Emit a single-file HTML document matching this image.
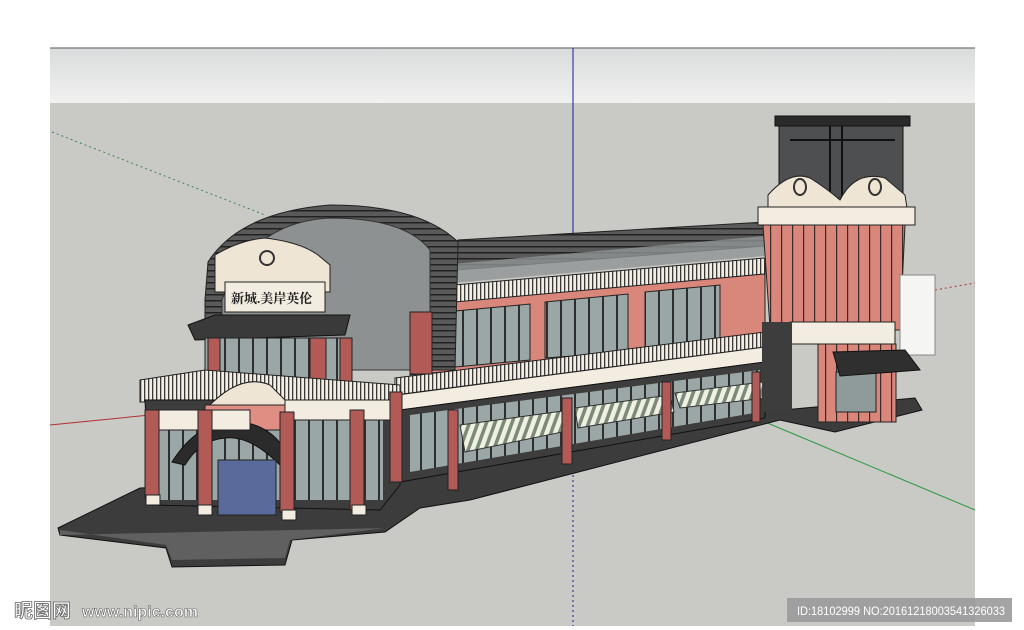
<!DOCTYPE html>
<html><head><meta charset="utf-8"><style>
html,body{margin:0;padding:0;background:#fff;width:1024px;height:630px;overflow:hidden;font-family:"Liberation Sans","Noto Sans CJK SC",sans-serif}
</style></head><body>
<svg width="1024" height="630" viewBox="0 0 1024 630" xmlns="http://www.w3.org/2000/svg" style="position:absolute;left:0;top:0">
<defs>
<linearGradient id="sky" x1="0" y1="0" x2="0" y2="1"><stop offset="0" stop-color="#d9dcdc"/><stop offset="1" stop-color="#f1f1f0"/></linearGradient>
<pattern id="stripe" width="8" height="8" patternUnits="userSpaceOnUse" patternTransform="rotate(20)"><rect width="8" height="8" fill="#eef0e4"/><rect width="3.5" height="8" fill="#7d8a78"/></pattern>
<pattern id="bal" width="4" height="10" patternUnits="userSpaceOnUse"><rect width="4" height="10" fill="#f3ede2"/><rect width="1.3" height="10" fill="#3a3a3a"/></pattern>
<pattern id="win" width="14" height="40" patternUnits="userSpaceOnUse"><rect width="14" height="40" fill="#9aa7a6"/><rect width="2" height="40" fill="#2e2e2e"/></pattern>
<pattern id="tow" width="11" height="40" patternUnits="userSpaceOnUse"><rect width="11" height="40" fill="#d9867b"/><rect width="1.2" height="40" fill="#3a2a2a"/></pattern>
<pattern id="rib" width="10" height="6" patternUnits="userSpaceOnUse"><rect width="10" height="6" fill="#5a5a5a"/><rect width="10" height="1.5" fill="#222"/></pattern>
</defs>
<rect x="50" y="48" width="925" height="578" fill="#c9c9c6"/>
<rect x="50" y="48" width="925" height="55" fill="url(#sky)"/>
<line x1="50" y1="48" x2="975" y2="48" fill="none" stroke="#777" stroke-width="1.3"/>
<line x1="573" y1="48" x2="573" y2="240" stroke="#1a1a9a" stroke-width="1"/>
<line x1="573" y1="460" x2="573" y2="626" stroke="#1a1a9a" stroke-width="1" stroke-dasharray="2,3"/>
<line x1="52" y1="132" x2="265" y2="215" stroke="#3a8a4a" stroke-width="1" stroke-dasharray="2,3"/>
<line x1="50" y1="425" x2="150" y2="415" stroke="#b03030" stroke-width="1"/>
<line x1="935" y1="290" x2="975" y2="283" stroke="#b03030" stroke-width="1" stroke-dasharray="2,3"/>
<line x1="765" y1="422" x2="975" y2="510" stroke="#2a9a3a" stroke-width="1"/>

<polygon points="58,528 140,488 400,478 760,412 915,398 922,410 835,432 780,420 470,500 420,508 385,532 292,540 285,565 172,567 166,548 60,535" fill="#3c3c3c" stroke="#111"/>
<polygon points="60,530 166,545 172,560 285,558 290,540 385,528 60,535" fill="#606060"/>

<polygon points="430,262 458,240 765,222 765,246 430,272" fill="url(#rib)" stroke="#222"/>
<polygon points="430,266 765,236 765,256 430,285" fill="#8f9493" opacity=".8"/>
<polygon points="420,288 765,258 765,274 420,306" fill="url(#bal)" stroke="#222"/>
<polygon points="410,306 765,274 765,342 410,375" fill="#d9867b" stroke="#222"/>
<polygon points="445,312 530,304 530,360 445,368" fill="url(#win)" stroke="#222"/>
<polygon points="545,302 628,294 628,352 545,358" fill="url(#win)" stroke="#222"/>
<polygon points="645,292 720,285 720,342 645,350" fill="url(#win)" stroke="#222"/>
<polygon points="395,378 765,332 765,347 395,395" fill="url(#bal)" stroke="#222"/>
<polygon points="397,395 765,347 765,362 400,410" fill="#f3ece0" stroke="#222"/>
<polygon points="400,410 765,362 765,418 400,482" fill="#3d3d3d" stroke="#111"/>
<polygon points="410,415 760,370 760,412 410,472" fill="url(#win)"/>
<polygon points="460,425 570,410 572,430 465,452" fill="url(#stripe)" stroke="#333"/>
<polygon points="575,408 670,395 674,412 578,428" fill="url(#stripe)" stroke="#333"/>
<polygon points="675,393 762,382 766,398 680,408" fill="url(#stripe)" stroke="#333"/>
<g fill="#b25a55" stroke="#222"><rect x="448" y="410" width="10" height="80"/><rect x="562" y="398" width="10" height="66"/><rect x="662" y="382" width="9" height="58"/><rect x="752" y="372" width="8" height="50"/></g>

<rect x="775" y="116" width="135" height="10" fill="#2a2a2a" stroke="#111"/>
<rect x="779" y="126" width="124" height="72" fill="#4d4f50" stroke="#111"/>
<g stroke="#111" stroke-width="2"><line x1="830" y1="126" x2="830" y2="198"/><line x1="842" y1="126" x2="842" y2="198"/><line x1="790" y1="140" x2="895" y2="140"/></g>
<path d="M768,208 L768,195 Q790,170 810,178 Q826,188 840,200 Q855,170 885,178 L905,195 L907,208 Z" fill="#eee5d5" stroke="#222"/>
<ellipse cx="800" cy="187" rx="6" ry="8" fill="none" stroke="#333" stroke-width="2"/>
<ellipse cx="875" cy="187" rx="6" ry="8" fill="none" stroke="#333" stroke-width="2"/>
<rect x="758" y="207" width="157" height="18" fill="#f3ece0" stroke="#222"/>
<polygon points="763,225 905,225 900,330 770,328" fill="url(#tow)" stroke="#222"/>
<rect x="900" y="275" width="35" height="80" fill="#f5f5f4" stroke="#888"/>
<rect x="790" y="322" width="105" height="22" fill="#f3ece0" stroke="#222"/>
<rect x="762" y="322" width="30" height="90" fill="#3d3d3d"/>
<rect x="818" y="344" width="78" height="78" fill="url(#tow)" stroke="#222"/>
<rect x="836" y="372" width="40" height="40" fill="#8f9a9a" stroke="#222"/>
<polygon points="833,352 905,350 920,370 840,376" fill="#2f2f2f" stroke="#111"/>

<path d="M205,300 L208,262 Q240,212 330,205 Q420,205 458,242 L455,370 L205,370 Z" fill="url(#rib)" stroke="#222"/>
<path d="M222,300 Q250,222 330,218 Q405,218 430,250 L430,370 L222,370 Z" fill="#8e9191" stroke="#333"/>
<path d="M215,270 L215,255 Q240,240 265,238 Q300,242 318,255 L330,265 L330,292 L215,292 Z" fill="#eee5d5" stroke="#222"/>
<circle cx="267" cy="258" r="7" fill="none" stroke="#333" stroke-width="2"/>
<rect x="225" y="282" width="100" height="30" fill="#f3ece0" stroke="#222"/>
<text x="231" y="303" font-size="13" font-weight="bold" fill="#222" font-family="'Liberation Serif','Noto Serif CJK SC',serif">新城.美岸英伦</text>
<polygon points="188,325 215,315 350,315 345,335 195,340" fill="#3a3a3a" stroke="#111"/>
<rect x="205" y="338" width="145" height="62" fill="url(#win)" stroke="#222"/>
<g fill="#b25a55" stroke="#222"><rect x="208" y="338" width="12" height="60"/><rect x="310" y="338" width="16" height="60"/><rect x="340" y="338" width="12" height="60"/><rect x="410" y="312" width="22" height="62"/></g>
<polygon points="140,380 205,370 400,385 400,400 140,402" fill="url(#bal)" stroke="#222"/>
<polygon points="145,400 400,400 400,485 380,510 150,505" fill="#3d3d3d" stroke="#111"/>
<rect x="158" y="420" width="225" height="80" fill="url(#win)"/>
<path d="M205,410 Q240,372 270,385 L285,400 L285,430 L205,430 Z" fill="#eee5d5" stroke="#222"/>
<rect x="205" y="405" width="80" height="25" fill="#e08e84" stroke="#222"/>
<path d="M172,462 Q200,418 240,422 Q275,425 292,462 L280,465 Q250,435 225,438 Q200,440 185,465 Z" fill="#2b2b2b" stroke="#111"/>
<rect x="218" y="460" width="58" height="55" fill="#5a6a9a" stroke="#222"/>
<rect x="150" y="410" width="100" height="20" fill="#f3ece0" stroke="#222"/>
<rect x="285" y="400" width="110" height="20" fill="#f3ece0" stroke="#222"/>
<g fill="#b25a55" stroke="#222"><rect x="145" y="410" width="14" height="88"/><rect x="198" y="410" width="14" height="98"/><rect x="280" y="412" width="14" height="100"/><rect x="350" y="410" width="14" height="100"/><rect x="390" y="392" width="12" height="90"/></g>
<g fill="#f3ece0" stroke="#222"><rect x="146" y="495" width="14" height="10"/><rect x="198" y="505" width="14" height="10"/><rect x="282" y="510" width="14" height="10"/><rect x="352" y="505" width="14" height="10"/></g>

<text x="14" y="617" font-size="19" font-weight="bold" fill="#fff" stroke="#666" stroke-width=".8" font-family="'Liberation Sans','Noto Sans CJK SC',sans-serif">昵图网</text>
<text x="82" y="617" font-size="16" font-weight="bold" fill="#fff" stroke="#666" stroke-width=".6" textLength="116" lengthAdjust="spacingAndGlyphs">www.nipic.com</text>
<rect x="787" y="598" width="225" height="24" fill="#9a9a9a" opacity=".9"/>
<text x="797" y="615" font-size="12" fill="#fff" textLength="208" lengthAdjust="spacingAndGlyphs">ID:18102999 NO:20161218003541326033</text>
</svg>
</body></html>
